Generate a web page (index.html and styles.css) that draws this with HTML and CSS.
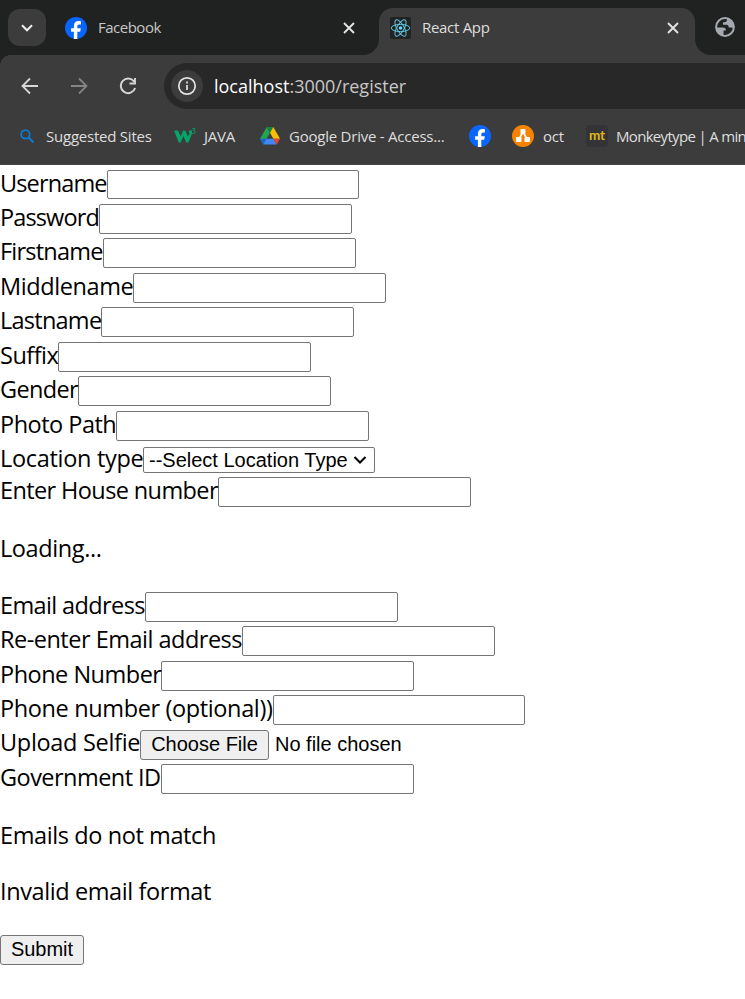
FILE: index.html
```
<!DOCTYPE html>
<html lang="en">
<head>
<meta charset="utf-8">
<title>React App</title>
<link rel="stylesheet" href="styles.css">
</head>
<body>
<svg width="0" height="0" class="defs"><defs>
<symbol id="fb" viewBox="0 0 22 22"><circle cx="11" cy="11" r="11" fill="#0866ff"/><path d="M8.900 22v-7.200H6.100v-3.500h2.800V9.100c0-3.500 1.700-5.100 4.800-5.100.9 0 1.700.1 2.200.2v3.200h-1.700c-1.400 0-1.900.7-1.900 2v1.900h3.500l-.6 3.500h-2.900V22z" fill="#fff"/></symbol>
<symbol id="close" viewBox="0 0 12 12"><path d="M1 1l10 10M11 1L1 11" fill="none" stroke="#e3e3e3" stroke-width="1.9"/></symbol>
</defs></svg>
<header class="browser">
  <div class="tabs">
    <div class="tab-search"><svg width="12" height="8" viewBox="0 0 12 8"><path d="M1 1.3l5 5 5-5" fill="none" stroke="#eee" stroke-width="2"/></svg></div>
    <div class="tab idle"><svg width="22" height="22"><use href="#fb"/></svg><span class="facebook">Facebook</span><svg class="x" width="12" height="12"><use href="#close"/></svg></div>
    <div class="tab active"><svg width="21" height="22" viewBox="0 0 21 22"><rect width="21" height="22" rx="2" fill="#222"/><g fill="none" stroke="#61c4de" stroke-width="1"><ellipse cx="10.5" cy="11" rx="9.3" ry="3.6"/><ellipse cx="10.5" cy="11" rx="9.3" ry="3.6" transform="rotate(60 10.5 11)"/><ellipse cx="10.5" cy="11" rx="9.3" ry="3.6" transform="rotate(120 10.5 11)"/></g><circle cx="10.5" cy="11" r="1.8" fill="#61dafb"/></svg><span class="react">React App</span><svg class="x" width="12" height="12"><use href="#close"/></svg></div>
    <svg class="globe" width="20" height="20" viewBox="0 0 20 20"><circle cx="10" cy="10" r="8.9" fill="none" stroke="#a5a9b0" stroke-width="2"/><path d="M1.5 10.5h6.2c2.2 0 3.3 1.1 3.3 3h-2.5v4.8C4 17.5 1.5 14 1.5 10.5zM12 1.7v1.1c0 1.6-1 2.4-2.7 2.4H8v2.6h3.5c1.6 0 2.2.9 2.2 2.6h2.2c1.2 0 2 .5 2.6 1.2C19.2 7 16.4 2.8 12 1.7z" fill="#a5a9b0"/></svg>
  </div>
  <div class="toolbar">
    <svg class="back" width="18" height="18" viewBox="0 0 18 18"><path d="M17 9H2M9 1.5L1.5 9 9 16.5" fill="none" stroke="#d6d6d6" stroke-width="1.8"/></svg>
    <svg class="forward" width="18" height="18" viewBox="0 0 18 18"><path d="M1 9h15M9 1.5L16.5 9 9 16.5" fill="none" stroke="#858585" stroke-width="1.8"/></svg>
    <svg class="reload" width="18" height="18" viewBox="0 0 18 18"><path d="M15.2 4.8A7.3 7.3 0 1 0 16.1 11M16 1v5.5h-5.5" fill="none" stroke="#d6d6d6" stroke-width="1.9"/></svg>
    <div class="omnibox"><span class="info"><svg width="20" height="20" viewBox="0 0 20 20"><circle cx="10" cy="10" r="8.2" fill="none" stroke="#e3e3e3" stroke-width="1.7"/><path d="M10 9v5M10 5.5v1.9" stroke="#e3e3e3" stroke-width="1.7"/></svg></span><span class="url"><b>localhost</b>:3000/register</span></div>
  </div>
  <nav class="bookmarks">
    <span class="bm b1"><svg width="14" height="14" viewBox="0 0 14 14"><circle cx="5.4" cy="5.4" r="4.3" fill="none" stroke="#0c7bd1" stroke-width="1.7"/><path d="M8.5 8.5l5 5" stroke="#0c7bd1" stroke-width="2"/></svg><span>Suggested Sites</span></span>
    <span class="bm b2"><svg width="22" height="16" viewBox="0 0 22 16"><path d="M0 2.500h4l2.800 6 2.200-6h2.200l2.800 6 1.600-3L14.500 2.500H18v3L14.500 14.500h-2.100L9.300 8 6.700 14.500H4.800z" fill="#04a56b"/><path d="M18.200 .8h2.800l-1.400 1.800c2 0 1.900 3-.1 3-.7 0-1.200-.3-1.500-.8" fill="none" stroke="#04a56b" stroke-width="1"/></svg><span>JAVA</span></span>
    <span class="bm b3"><svg width="20" height="18" viewBox="0 0 20 18"><path d="M6.700 0L0 11.800 3.300 17.500 10 5.800z" fill="#23a451"/><path d="M6.700 0h6.600L10 5.800z" fill="#128438"/><path d="M13.300 0L20 11.800h-6.600L10 5.800z" fill="#fbbc04"/><path d="M0 11.800h6.600l-3.300 5.700z" fill="#1967d2"/><path d="M6.600 11.800h6.800l3.300 5.700H3.300z" fill="#4285f4"/><path d="M13.400 11.800H20l-3.300 5.700z" fill="#ea4335"/></svg><span>Google Drive - Access...</span></span>
    <span class="bm b4"><svg width="22" height="22"><use href="#fb"/></svg></span>
    <span class="bm b5"><svg width="22" height="22" viewBox="0 0 22 22"><circle cx="11" cy="11" r="11" fill="#f58300"/><path d="M11 7L6.700 14.500M11 7l4.300 7.500" stroke="#fff" stroke-width="1.6"/><g fill="#fff"><rect x="8.500" y="4" width="5" height="5" rx=".7"/><rect x="4" y="12" width="5.500" height="5" rx=".7"/><rect x="12.500" y="12" width="5.500" height="5" rx=".7"/></g></svg><span>oct</span></span>
    <span class="bm b6"><i class="mt">mt</i><span>Monkeytype | A min</span></span>
  </nav>
</header>
<main>
  <div class="row"><label class="l1">Username</label><input class="first"></div>
  <div class="row"><label class="l2">Password</label><input></div>
  <div class="row"><label class="l3">Firstname</label><input></div>
  <div class="row"><label class="l4">Middlename</label><input></div>
  <div class="row"><label class="l5">Lastname</label><input></div>
  <div class="row"><label class="l6">Suffix</label><input></div>
  <div class="row"><label class="l7">Gender</label><input></div>
  <div class="row"><label class="l8">Photo Path</label><input></div>
  <div class="row short"><label class="l9">Location type</label><span class="select">--Select Location Type<svg width="14" height="8" viewBox="0 0 14 8"><path d="M1.5 1l5.500 5.500L12.500 1" fill="none" stroke="#000" stroke-width="2"/></svg></span></div>
  <div class="row"><label class="l10">Enter House number</label><input></div>
  <p class="p1">Loading...</p>
  <div class="row"><label class="l11">Email address</label><input></div>
  <div class="row"><label class="l12">Re-enter Email address</label><input></div>
  <div class="row"><label class="l13">Phone Number</label><input></div>
  <div class="row"><label class="l14">Phone number (optional))</label><input class="optional"></div>
  <div class="row"><label class="l15">Upload Selfie</label><button class="choose">Choose File</button><span class="nofile">No file chosen</span></div>
  <div class="row"><label class="l16">Government ID</label><input></div>
  <p>Emails do not match</p>
  <p>Invalid email format</p>
  <div class="row"><button class="submit">Submit</button></div>
</main>
</body>
</html>
```
FILE: styles.css
```
* { box-sizing: border-box; }
body { margin: 0; background: #fff; color: #000; overflow: hidden; font-family: "Open Sans", "Noto Sans", sans-serif; }
svg { display: block; flex: none; }
.defs { position: absolute; }

.browser { height: 165px; background: #3c3c3c; color: #dedede; white-space: nowrap; overflow: hidden; border-bottom: 1px solid #484848; }
.tabs { height: 55px; display: flex; background: linear-gradient(#3c3c3c, #3c3c3c) 363px 39px / 348px 16px no-repeat #202221; font-size: 15px; }
.tab-search { width: 38px; height: 37px; margin: 9px 0 0 8px; border-radius: 12px; background: #3c3c3c; display: flex; align-items: center; justify-content: center; flex: none; }
.tab { display: flex; align-items: center; flex: none; }
.tab span { margin: -2px 0 0 11px; }
.idle { width: 333px; height: 55px; padding: 0 24px 0 19px; color: #c7c7c7; border-bottom-right-radius: 16px; background: #202221; }
.facebook { letter-spacing: -.5px; }
.react { letter-spacing: -.3px; }
.tab .x { margin-left: auto; }
.active { width: 316px; height: 47px; margin-top: 8px; padding: 0 16px 8px 11px; background: #3c3c3c; border-radius: 14px 14px 0 0; }
.globe { box-sizing: content-box; padding: 17px 10px 18px 20px; border-bottom-left-radius: 16px; background: #202221; }

.toolbar { height: 62px; display: flex; align-items: center; background: radial-gradient(circle at 10px 10px, #3c3c3c 9.5px, #202221 10px) 0 0 / 10px 10px no-repeat; }
.back { margin-left: 21px; }
.forward { margin-left: 31px; }
.reload { margin-left: 31px; }
.omnibox { margin-left: 27px; flex: 1; height: 46px; border-radius: 23px 0 0 23px; background: #282828; display: flex; align-items: center; padding-left: 7px; }
.info { width: 32px; height: 32px; border-radius: 50%; background: #3c3c3c; display: flex; align-items: center; justify-content: center; }
.url { margin-left: 11px; font-size: 18px; color: #c7c7c7; }
.url b { font-weight: 400; color: #fff; }

.bookmarks { height: 38px; display: flex; font-size: 15px; letter-spacing: -.23px; }
.bm { display: flex; align-items: center; flex: none; }
.bm span { margin-left: 9px; }
.b1 { margin-left: 20px; width: 154px; }
.bm.b1 span { margin-left: 12px; }
.b2 { width: 86px; }
.bm.b2 span { margin-left: 8px; }
.b3 { width: 209px; }
.b4 { width: 43px; }
.b5 { width: 74px; }
.bm.b6 span { margin-left: 8px; letter-spacing: -.68px; }
.mt { width: 22px; height: 22px; border-radius: 4px; background: #323437; color: #e2b714; font: 700 13.5px/20px "Lato", sans-serif; letter-spacing: 0; text-align: center; }

main { padding-top: 2.325px; }
.row { height: 34.45px; display: flex; align-items: center; font-size: 23.5px; white-space: nowrap; }
.row.short { height: 32px; }
label { line-height: 32px; flex: none; position: relative; top: -2px; }
.short label { top: -1px; }
.l1 { width: 107px; letter-spacing: -.87px; }
.l2 { width: 99px; letter-spacing: -.87px; }
.l3 { width: 103px; letter-spacing: -.78px; }
.l4 { width: 133px; letter-spacing: -.4px; }
.l5 { width: 101px; letter-spacing: -.75px; }
.l6 { width: 58px; letter-spacing: -.5px; }
.l7 { width: 78px; letter-spacing: -.67px; }
.l8 { width: 116px; letter-spacing: -.5px; }
.l9 { width: 143px; letter-spacing: -.31px; }
.l10 { width: 218px; letter-spacing: -.61px; }
.l11 { width: 145px; letter-spacing: -.62px; }
.l12 { width: 242px; letter-spacing: -.5px; }
.l13 { width: 161px; letter-spacing: -.5px; }
.l14 { width: 273px; letter-spacing: -.37px; }
.l15 { width: 140px; letter-spacing: -.31px; }
.l16 { width: 161px; letter-spacing: -.54px; }
input { width: 253px; height: 30px; padding: 0; border: 1px solid #767676; border-radius: 2px; background: #fff; flex: none; }
.first { width: 252px; height: 29px; margin-bottom: 1px; }
.optional { width: 252px; }
p { margin: 24px 0; font-size: 23.5px; line-height: 32px; letter-spacing: -.4px; position: relative; top: -1.5px; }
.p1 { margin-bottom: 24.2px; }
.select, button, .nofile { font: 20px/24px "Liberation Sans", sans-serif; color: #000; }
.select { width: 232px; height: 26px; margin-top: 2px; border: 1px solid #767676; border-radius: 2px; display: flex; align-items: center; justify-content: space-between; padding: 0 7px 0 5px; }
button { height: 30px; margin: 1px 0 0; padding: 0 0 2px; border: 1px solid #767676; border-radius: 3px; background: #efefef; }
.choose { width: 129px; }
.nofile { margin-left: 6px; }
.submit { width: 84px; }
```
